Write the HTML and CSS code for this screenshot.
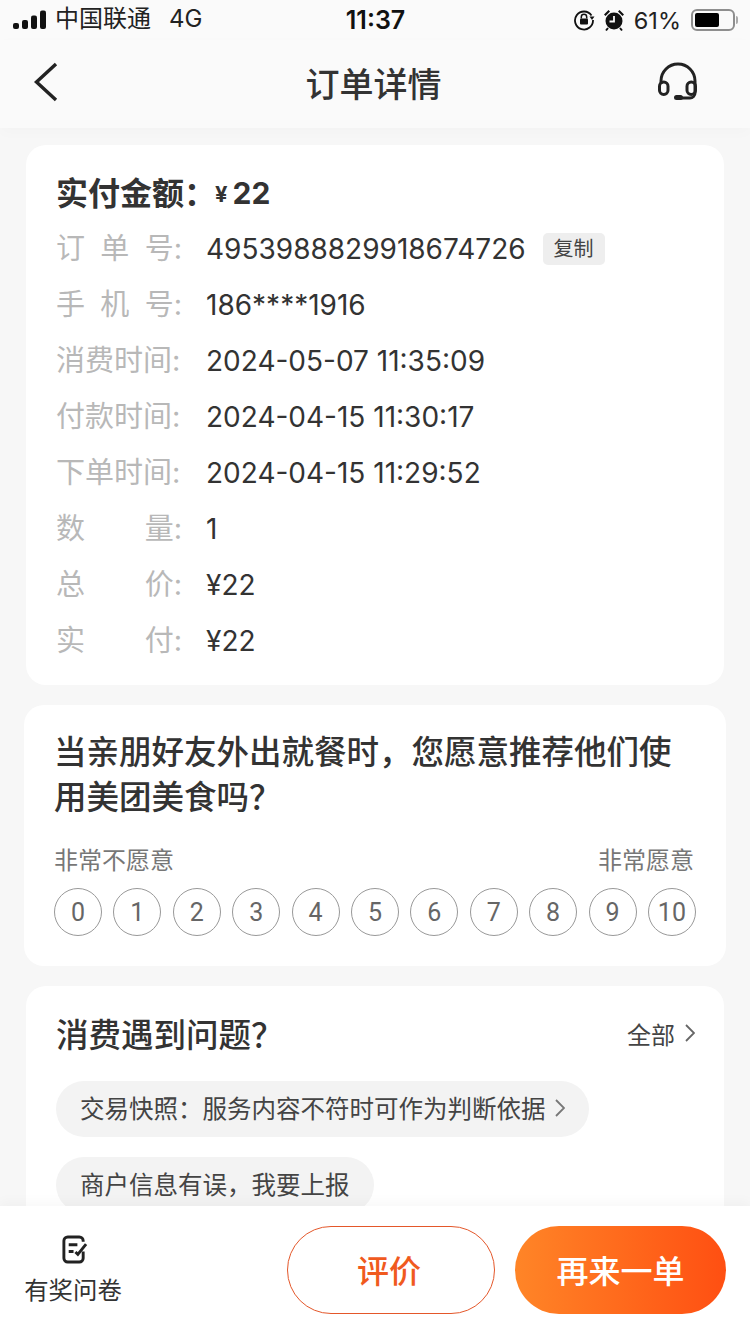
FILE: index.html
```html
<!DOCTYPE html>
<html lang="zh-CN">
<head>
    <meta charset="UTF-8">
    <meta name="viewport" content="width=device-width, initial-scale=1.0">
    <title>订单详情</title>
    <link rel="stylesheet" href="styles.css">
</head>
<body>
    <div class="page">
        <div class="status-bar">
            <div class="status-left">
                <svg class="signal" width="36" height="20" viewBox="0 0 36 20">
                    <rect x="0" y="13" width="6" height="6" rx="2"/>
                    <rect x="9" y="10" width="6" height="9" rx="2"/>
                    <rect x="18" y="5.5" width="6" height="13.5" rx="2"/>
                    <rect x="27" y="0.5" width="6" height="18.5" rx="2"/>
                </svg>
                <div class="carrier">中国联通<span class="network">4G</span></div>
            </div>
            <div class="status-time">11:37</div>
            <div class="status-right">
                <svg width="22" height="22" viewBox="0 0 22 22">
                    <path d="M18.5 6.5A9 9 0 1 0 20 11" fill="none" stroke="#111" stroke-width="1.8"/>
                    <path d="M16.5 7.5h5l-2.500 3.500z" fill="#111"/>
                    <path d="M8.300 9.500V8a2.700 2.700 0 0 1 5.400 0v1.500" fill="none" stroke="#111" stroke-width="1.500"/>
                    <rect x="7" y="9.500" width="8" height="6" rx="1" fill="#111"/>
                </svg>
                <svg class="alarm" width="22" height="24" viewBox="0 0 22 24">
                    <circle cx="11" cy="13" r="8.500" fill="#111"/>
                    <path d="M11 8v5.500H6.500" fill="none" stroke="#fafafa" stroke-width="1.800"/>
                    <path d="M1 6.500 5.500 2 7 3.500 2.500 8zM21 6.500 16.500 2 15 3.500 19.500 8z" fill="#111"/>
                    <path d="M5 20l-2 2.500M17 20l2 2.500" stroke="#111" stroke-width="2"/>
                </svg>
                <span class="battery-text">61%</span>
                <div class="battery"><div class="battery-level"></div></div>
                <div class="battery-cap"></div>
            </div>
        </div>

        <div class="nav-bar">
            <svg class="nav-back" width="28" height="40" viewBox="0 0 28 40">
                <path d="M24 2 4.500 20 24 38" fill="none" stroke="#222" stroke-width="3.400"/>
            </svg>
            <h1>订单详情</h1>
            <svg class="nav-service" width="42" height="40" viewBox="0 0 42 40">
                <path d="M4 22V19a17 17 0 0 1 34 0v12a5 5 0 0 1-5 5H22" fill="none" stroke="#222" stroke-width="3"/>
                <rect x="2.500" y="20" width="8.500" height="12.500" rx="4.200" fill="none" stroke="#222" stroke-width="3"/>
                <rect x="30" y="20" width="8.500" height="12.500" rx="4.200" fill="none" stroke="#222" stroke-width="3"/>
                <rect x="17" y="33" width="9" height="5" rx="2.500" fill="#222"/>
            </svg>
        </div>

        <div class="content">
            <div class="card card-order">
                <div class="paid-title">实付金额：<span class="paid-yen">¥</span><span class="paid-num">22</span></div>
                <div class="info-row"><span class="info-label"><span>订</span><span>单</span><span>号:</span></span><span class="info-value">4953988829918674726</span><span class="copy-btn">复制</span></div>
                <div class="info-row"><span class="info-label"><span>手</span><span>机</span><span>号:</span></span><span class="info-value">186****1916</span></div>
                <div class="info-row"><span class="info-label"><span>消费时间:</span></span><span class="info-value">2024-05-07 11:35:09</span></div>
                <div class="info-row"><span class="info-label"><span>付款时间:</span></span><span class="info-value">2024-04-15 11:30:17</span></div>
                <div class="info-row"><span class="info-label"><span>下单时间:</span></span><span class="info-value">2024-04-15 11:29:52</span></div>
                <div class="info-row"><span class="info-label"><span>数</span><span>量:</span></span><span class="info-value">1</span></div>
                <div class="info-row"><span class="info-label"><span>总</span><span>价:</span></span><span class="info-value">¥22</span></div>
                <div class="info-row"><span class="info-label"><span>实</span><span>付:</span></span><span class="info-value">¥22</span></div>
            </div>

            <div class="card card-survey">
                <div class="survey-title">当亲朋好友外出就餐时，您愿意推荐他们使用美团美食吗？</div>
                <div class="survey-ends"><span>非常不愿意</span><span>非常愿意</span></div>
                <div class="score-list">
                    <span class="score">0</span>
                    <span class="score">1</span>
                    <span class="score">2</span>
                    <span class="score">3</span>
                    <span class="score">4</span>
                    <span class="score">5</span>
                    <span class="score">6</span>
                    <span class="score">7</span>
                    <span class="score">8</span>
                    <span class="score">9</span>
                    <span class="score">10</span>
                </div>
            </div>

            <div class="card card-help">
                <div class="help-head">
                    <div class="help-title">消费遇到问题？</div>
                    <div class="help-all">全部
                        <svg width="10" height="18" viewBox="0 0 10 18"><path d="M1 1l8 8-8 8" fill="none" stroke="#666" stroke-width="1.800"/></svg>
                    </div>
                </div>
                <div class="help-pill">交易快照：服务内容不符时可作为判断依据
                    <svg width="10" height="18" viewBox="0 0 10 18"><path d="M1 1l8 8-8 8" fill="none" stroke="#777" stroke-width="1.800"/></svg>
                </div>
                <div class="help-pill">商户信息有误，我要上报</div>
            </div>
        </div>

        <div class="footer">
            <div class="survey-link">
                <svg class="survey-icon" width="27" height="29" viewBox="0 0 28 30">
                    <path d="M23 7V6a4 4 0 0 0-4-4H7a4 4 0 0 0-4 4v18a4 4 0 0 0 4 4h12a4 4 0 0 0 4-4v-7" fill="none" stroke="#222" stroke-width="3"/>
                    <path d="M8 10h9M8 17h5" stroke="#222" stroke-width="3" fill="none"/>
                    <path d="M15 17.500 17.500 20 26 9.500" stroke="#222" stroke-width="3" fill="none"/>
                </svg>
                <span>有奖问卷</span>
            </div>
            <div class="btn btn-outline">评价</div>
            <div class="btn btn-primary">再来一单</div>
        </div>
    </div>
</body>
</html>
```

FILE: styles.css
```css
* {
    box-sizing: border-box;
}
body {
    margin: 0;
    font-family: Inter, 'Noto Sans CJK SC', sans-serif;
    color: #333;
    background: #f7f7f7;
}
.page {
    height: 1334px;
    display: flex;
    flex-direction: column;
    overflow: hidden;
}

/* status bar */
.status-bar {
    height: 40px;
    flex: none;
    display: flex;
    align-items: center;
    padding: 0 12px 0 13px;
    background: #fafafa;
    color: #222;
}
.status-left {
    display: flex;
    align-items: center;
    flex: 1;
}
.signal {
    fill: #111;
    margin-right: 6px;
}
.carrier {
    font-size: 24px;
    line-height: 36px;
    margin-top: -2px;
}
.network {
    margin-left: 18px;
}
.status-time {
    font-size: 25px;
    font-weight: 600;
    color: #111;
}
.status-right {
    flex: 1;
    display: flex;
    align-items: center;
    justify-content: flex-end;
    font-size: 23.5px;
}
.alarm {
    margin-left: 8px;
}
.battery-text {
    margin-left: 9px;
    margin-right: 10px;
}
.battery {
    width: 44px;
    height: 22px;
    border: 2px solid #8e8e8e;
    border-radius: 6px;
    padding: 2px;
}
.battery-level {
    width: 24px;
    height: 100%;
    background: #000;
    border-radius: 2px;
}
.battery-cap {
    width: 2px;
    height: 8px;
    margin-left: 1px;
    background: #aaa;
    border-radius: 0 2px 2px 0;
}

/* nav */
.nav-bar {
    height: 88px;
    flex: none;
    display: grid;
    grid-template-columns: 1fr auto 1fr;
    align-items: center;
    padding: 0 43px 4px 40px;
    background: #fafafa;
    box-shadow: 0 4px 14px rgba(0,0,0,0.02);
}
.nav-bar h1 {
    margin: 0;
    font-size: 34px;
    font-weight: 500;
    color: #333;
}
.nav-back {
    margin-left: -8px;
}
.nav-service {
    justify-self: end;
    margin-right: 8px;
}

/* cards */
.content {
    flex: 1;
    min-height: 0;
    overflow: hidden;
    padding-top: 17px;
}
.card {
    background: white;
    border-radius: 20px;
    margin: 0 26px 20px;
}
.card-order {
    height: 540px;
    padding: 24px 30px 0;
}
.paid-title {
    height: 44px;
    display: flex;
    align-items: center;
    font-size: 32px;
    font-weight: 700;
    margin-bottom: 8px;
}
.paid-yen {
    font-size: 22px;
    margin: 6px 5px 0 -1px;
}
.paid-num {
    font-size: 30px;
    margin-top: 3px;
}
.info-row {
    height: 56px;
    display: flex;
    align-items: center;
    font-size: 28px;
}
.info-label {
    width: 126px;
    margin-right: 24px;
    display: flex;
    justify-content: space-between;
    color: #b8b8b8;
    font-size: 29px;
    line-height: 38px;
}
.info-value {
    color: #333;
}
.copy-btn {
    margin-left: 17px;
    width: 62px;
    height: 32px;
    line-height: 32px;
    text-align: center;
    background: #eeeeee;
    border-radius: 5px;
    font-size: 20px;
    color: #444;
}
.card-survey {
    height: 261px;
    margin: 0 24px 20px;
    padding: 25px 30px 0;
}
.survey-title {
    font-size: 32.5px;
    font-weight: 500;
    line-height: 45px;
}
.survey-ends {
    display: flex;
    justify-content: space-between;
    margin-top: 23px;
    padding-right: 2px;
    font-size: 24px;
    line-height: 36px;
    color: #777;
}
.score-list {
    display: flex;
    justify-content: space-between;
    margin-top: 9px;
}
.score {
    width: 48px;
    height: 48px;
    border: 1px solid #999;
    border-radius: 50%;
    display: flex;
    align-items: center;
    justify-content: center;
    font-family: Roboto, sans-serif;
    font-size: 25px;
    color: #666;
}
.card-help {
    padding: 28px 30px 40px;
}
.help-head {
    display: flex;
    align-items: center;
    justify-content: space-between;
}
.help-title {
    font-size: 32.5px;
    font-weight: 500;
    line-height: 44px;
}
.help-all {
    display: flex;
    align-items: center;
    gap: 10px;
    margin-right: -1px;
    padding-bottom: 6px;
    font-size: 24px;
    color: #444;
}
.help-pill {
    display: flex;
    width: fit-content;
    align-items: center;
    gap: 9px;
    height: 56px;
    margin-top: 20px;
    padding: 0 24px 3px;
    background: #f3f3f3;
    border-radius: 28px;
    font-size: 24.5px;
    color: #444;
}
.help-head + .help-pill {
    margin-top: 23px;
}

/* bottom bar */
.footer {
    height: 128px;
    flex: none;
    display: flex;
    padding: 20px 24px 0 24px;
    background: white;
    box-shadow: 0 -4px 12px rgba(0,0,0,0.03);
}
.survey-link {
    width: 98px;
    margin-right: 165px;
    padding-top: 9px;
    display: flex;
    flex-direction: column;
    align-items: center;
    gap: 7px;
    font-size: 24.4px;
    color: #333;
    white-space: nowrap;
}
.survey-icon {
    margin-left: 3px;
}
.btn {
    height: 88px;
    padding-bottom: 3px;
    display: flex;
    align-items: center;
    justify-content: center;
    border-radius: 44px;
    font-size: 32px;
    font-weight: 500;
}
.btn-outline {
    width: 208px;
    margin-right: 20px;
    padding-right: 4px;
    border: 1px solid #e4572a;
    color: #f05a1e;
}
.btn-primary {
    width: 211px;
    background: linear-gradient(90deg, #ff8527, #ff4f12);
    color: white;
}
```
